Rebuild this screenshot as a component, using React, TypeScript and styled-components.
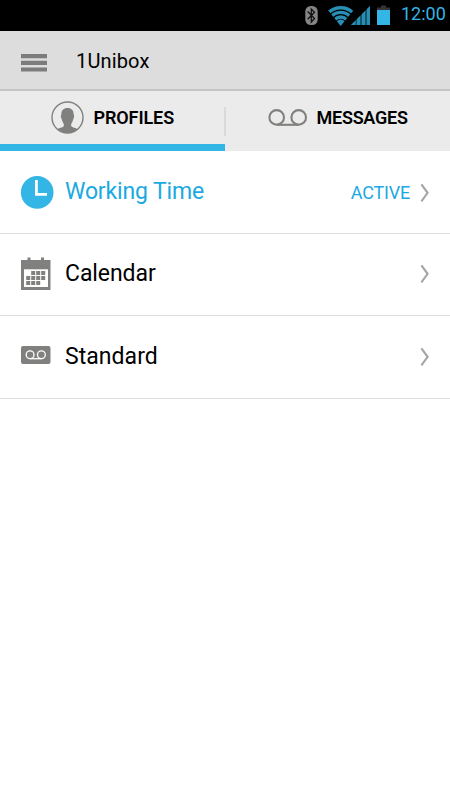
import React from "react";
import styled, { createGlobalStyle } from "styled-components";

const GlobalStyle = createGlobalStyle`
  * { box-sizing: border-box; }
  body { margin: 0; background: #fff; font-family: Roboto, sans-serif; }
  svg { display: block; flex: none; }
`;

const Screen = styled.div`
  width: 450px;
  height: 800px;
  display: flex;
  flex-direction: column;
  background: #fff;
  color: #000;
  overflow: hidden;
`;

const StatusBar = styled.header`
  height: 31px;
  flex: none;
  display: flex;
  justify-content: flex-end;
  background: #000;
  padding-right: 5px;
`;

const Clock = styled.time`
  width: 44px;
  margin-left: 11px;
  color: #33b5e5;
  font-size: 18px;
  line-height: 28px;
  white-space: nowrap;
`;

const TitleBar = styled.div`
  height: 60px;
  flex: none;
  display: flex;
  background: #ddd;
  border-bottom: 2px solid #c4c4c4;
  padding-left: 21px;
`;

const MenuButton = styled.button`
  width: 26px;
  height: 18px;
  margin: 23px 29px 0 0;
  padding: 0;
  border: 0;
  background: none;
`;

const Title = styled.h1`
  margin: 0;
  font-size: 20px;
  font-weight: 400;
  line-height: 60px;
  letter-spacing: 0.15px;
`;

const Tabs = styled.nav`
  height: 60px;
  flex: none;
  display: flex;
  background: #ebebeb;
`;

const Tab = styled.button<{ $active?: boolean; $inset: number }>`
  width: 225px;
  height: 60px;
  display: flex;
  align-items: flex-start;
  padding: 0 0 0 ${(p) => p.$inset}px;
  border: 0;
  border-bottom: ${(p) => (p.$active ? "7px solid #33b5e5" : "0")};
  background: none;
  font-family: inherit;
  color: #000;
`;

const TabDivider = styled.span`
  width: 2px;
  height: 29px;
  margin: 16px -1px 0;
  background: #dadada;
`;

const TabLabel = styled.span<{ $gap: number; $spacing: number }>`
  margin-left: ${(p) => p.$gap}px;
  font-size: 18px;
  font-weight: 600;
  line-height: 54px;
  letter-spacing: ${(p) => p.$spacing}px;
`;

const List = styled.main`
  display: flex;
  flex-direction: column;
`;

const Row = styled.div<{ $active?: boolean; $height: number }>`
  height: ${(p) => p.$height}px;
  display: flex;
  padding: 0 20px 0 20px;
  border-bottom: 1px solid #dedede;
  color: ${(p) => (p.$active ? "#1ba9e1" : "#000")};
`;

const IconSlot = styled.span<{ $height: number }>`
  width: 45px;
  height: ${(p) => p.$height}px;
  display: flex;
  align-items: center;
`;

const RowLabel = styled.span<{ $line: number; $spacing: number }>`
  flex: 1;
  font-size: 23px;
  line-height: ${(p) => p.$line}px;
  letter-spacing: ${(p) => p.$spacing}px;
`;

const State = styled.span`
  margin-right: 10px;
  font-size: 18px;
  line-height: 83px;
  letter-spacing: -0.2px;
`;

const ChevronSlot = styled.span<{ $height: number }>`
  display: flex;
  align-items: center;
  height: ${(p) => p.$height}px;
`;

const Bluetooth = () => (
  <svg width="14" height="31" viewBox="0 0 14 31">
    <rect x="1.3" y="6" width="12.4" height="19" rx="5.5" fill="#858585" />
    <path d="M3.7 11.5 10.5 18.5 7.3 22V9L10.5 12.2 3.7 19.2" fill="none" stroke="#111" strokeWidth="1.3" />
  </svg>
);

const Wifi = () => (
  <svg width="26" height="31" viewBox="0 0 26 31">
    <defs>
      <clipPath id="wifi-wedge">
        <path d="M12.7 26-1.5 8.5V0H27V8.5Z" />
      </clipPath>
    </defs>
    <g clipPath="url(#wifi-wedge)" fill="none" stroke="#298eb4" strokeWidth="3.4">
      <circle cx="12.7" cy="25" r="17.3" />
      <circle cx="12.7" cy="25" r="12.6" />
      <circle cx="12.7" cy="25" r="8" />
      <circle cx="12.7" cy="25" r="2.7" strokeWidth="5.4" />
    </g>
  </svg>
);

const Signal = () => (
  <svg width="20" height="31" viewBox="0 0 20 31">
    <path d="M0 25 19 6V25Z" fill="#17556c" />
    <path d="M0 25 4.5 20.5V25Z" fill="#298eb4" />
    <path d="M6 25V19L9 16V25Z" fill="#298eb4" />
    <path d="M11 25V14L14 11V25Z" fill="#298eb4" />
    <path d="M16 25V9L19 6V25Z" fill="#298eb4" />
  </svg>
);

const Battery = () => (
  <svg width="13" height="31" viewBox="0 0 13 31">
    <path d="M4 5.5H9V7.5H13V10H0V7.5H4Z" fill="#353535" />
    <path d="M0 10H13V25H0Z" fill="#33b5e5" />
  </svg>
);

const MenuIcon = () => (
  <svg width="26" height="18" viewBox="0 0 26 18">
    <path d="M0 0H26V4.2H0ZM0 6.8H26V11H0ZM0 13.4H26V17.6H0Z" fill="#7c7c7c" />
  </svg>
);

const ProfileIcon = () => (
  <svg width="33" height="54" viewBox="0 0 33 54">
    <defs>
      <clipPath id="profile-circle">
        <circle cx="16.5" cy="26.5" r="15.5" />
      </clipPath>
    </defs>
    <path
      clipPath="url(#profile-circle)"
      d="M16.5 17C20.5 17 22.6 19.3 22.6 23.2C23.5 24.2 23.1 27 22.3 28C21.8 30.4 21.1 31.7 20.2 32.7V35C21.5 37 27 36.8 29.5 40.5V44H3.5V40.5C6 36.8 11.5 37 12.8 35V32.7C11.9 31.7 11.2 30.4 10.7 28C9.9 27 9.5 24.2 10.4 23.2C10.4 19.3 12.5 17 16.5 17Z"
      fill="#80807e"
    />
    <circle cx="16.5" cy="26.5" r="15.5" fill="none" stroke="#80807e" strokeWidth="1.4" />
  </svg>
);

const VoicemailIcon = () => (
  <svg width="40" height="54" viewBox="0 0 40 54">
    <g fill="none" stroke="#80807e" strokeWidth="2.1">
      <circle cx="8.7" cy="26.4" r="7.3" />
      <circle cx="30.7" cy="26.4" r="7.3" />
      <path d="M8.7 33.8H30.7" />
    </g>
  </svg>
);

const ClockIcon = () => (
  <svg width="34" height="34" viewBox="0 0 34 34">
    <circle cx="17.2" cy="17.4" r="16.3" fill="#33b5e5" />
    <path d="M16.4 5V19.4H27" fill="none" stroke="#fff" strokeWidth="2.8" />
  </svg>
);

const calendarCells = [
  [11, 14], [16, 14], [21, 14],
  [6, 19], [11, 19], [16, 19], [21, 19],
  [6, 24], [11, 24], [16, 24],
];

const CalendarIcon = () => (
  <svg width="31" height="34" viewBox="0 0 31 34">
    <path d="M1 3H7.5V0.5H10.5V3H21V0.5H24V3H30.5V33H1Z" fill="#80807e" />
    <path d="M4 12.3H28V30H4Z" fill="#fff" />
    {calendarCells.map(([x, y]) => (
      <rect key={`${x}-${y}`} x={x + 0.2} y={y} width="4" height="4" fill="#80807e" />
    ))}
  </svg>
);

const VoicemailBadge = () => (
  <svg width="31" height="20" viewBox="0 0 31 20">
    <rect x="1" y="1" width="29.5" height="18" rx="2" fill="#80807e" />
    <g fill="none" stroke="#fff" strokeWidth="1.3">
      <circle cx="10.1" cy="9.7" r="3.9" />
      <circle cx="21.4" cy="9.7" r="3.9" />
      <path d="M10.1 13.7H21.4" />
    </g>
  </svg>
);

const Chevron = () => (
  <svg width="10" height="18" viewBox="0 0 10 18">
    <path d="M1.4 0.3 7.6 8.8 1.4 17.3" fill="none" stroke="#a5a5a5" strokeWidth="2.1" />
  </svg>
);

const StatusIcons = styled.div`
  display: grid;
  grid-template-columns: 24px 23px 26px 13px;
`;

const profiles = [
  { name: "Working Time", icon: <ClockIcon />, active: true, height: 83, spacing: -0.15, line: 82, iconHeight: 82, chevronHeight: 83 },
  { name: "Calendar", icon: <CalendarIcon />, height: 82, spacing: -0.08, line: 79, iconHeight: 80, chevronHeight: 80 },
  { name: "Standard", icon: <VoicemailBadge />, height: 83, spacing: 0.05, line: 81, iconHeight: 78, chevronHeight: 81 },
];

export default function App() {
  return (
    <>
      <GlobalStyle />
      <Screen>
        <StatusBar>
          <StatusIcons>
            <Bluetooth />
            <Wifi />
            <Signal />
            <Battery />
          </StatusIcons>
          <Clock>12:00</Clock>
        </StatusBar>
        <TitleBar>
          <MenuButton aria-label="Menu">
            <MenuIcon />
          </MenuButton>
          <Title>1Unibox</Title>
        </TitleBar>
        <Tabs>
          <Tab $active $inset={51}>
            <ProfileIcon />
            <TabLabel $gap={9.5} $spacing={-0.1}>PROFILES</TabLabel>
          </Tab>
          <TabDivider />
          <Tab $inset={43}>
            <VoicemailIcon />
            <TabLabel $gap={8.5} $spacing={-0.25}>MESSAGES</TabLabel>
          </Tab>
        </Tabs>
        <List>
          {profiles.map((p) => (
            <Row key={p.name} $active={p.active} $height={p.height}>
              <IconSlot $height={p.iconHeight}>{p.icon}</IconSlot>
              <RowLabel $line={p.line} $spacing={p.spacing}>{p.name}</RowLabel>
              {p.active && <State>ACTIVE</State>}
              <ChevronSlot $height={p.chevronHeight}>
                <Chevron />
              </ChevronSlot>
            </Row>
          ))}
        </List>
      </Screen>
    </>
  );
}
